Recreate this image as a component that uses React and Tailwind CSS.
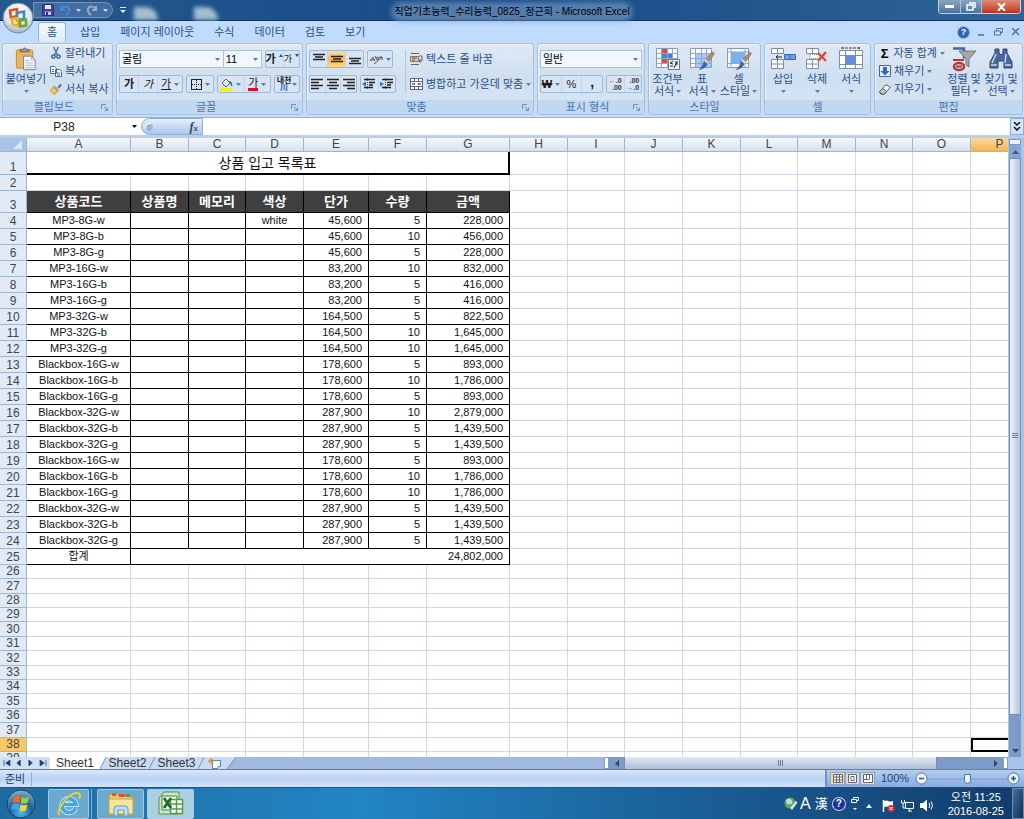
import React from "react";

const KR = "font-['Liberation_Sans','Noto_Sans_CJK_KR',sans-serif]";

/* ---------- data ---------- */
const columns = [
  ["A", 104], ["B", 58], ["C", 57], ["D", 58], ["E", 65], ["F", 58], ["G", 83],
  ["H", 58], ["I", 57], ["J", 58], ["K", 58], ["L", 57], ["M", 58], ["N", 57],
  ["O", 58], ["P", 58],
];
const items = [
  ["MP3-8G-w", "white", "45,600", "5", "228,000"],
  ["MP3-8G-b", "", "45,600", "10", "456,000"],
  ["MP3-8G-g", "", "45,600", "5", "228,000"],
  ["MP3-16G-w", "", "83,200", "10", "832,000"],
  ["MP3-16G-b", "", "83,200", "5", "416,000"],
  ["MP3-16G-g", "", "83,200", "5", "416,000"],
  ["MP3-32G-w", "", "164,500", "5", "822,500"],
  ["MP3-32G-b", "", "164,500", "10", "1,645,000"],
  ["MP3-32G-g", "", "164,500", "10", "1,645,000"],
  ["Blackbox-16G-w", "", "178,600", "5", "893,000"],
  ["Blackbox-16G-b", "", "178,600", "10", "1,786,000"],
  ["Blackbox-16G-g", "", "178,600", "5", "893,000"],
  ["Blackbox-32G-w", "", "287,900", "10", "2,879,000"],
  ["Blackbox-32G-b", "", "287,900", "5", "1,439,500"],
  ["Blackbox-32G-g", "", "287,900", "5", "1,439,500"],
  ["Blackbox-16G-w", "", "178,600", "5", "893,000"],
  ["Blackbox-16G-b", "", "178,600", "10", "1,786,000"],
  ["Blackbox-16G-g", "", "178,600", "10", "1,786,000"],
  ["Blackbox-32G-w", "", "287,900", "5", "1,439,500"],
  ["Blackbox-32G-b", "", "287,900", "5", "1,439,500"],
  ["Blackbox-32G-g", "", "287,900", "5", "1,439,500"],
];
const headings = ["상품코드", "상품명", "메모리", "색상", "단가", "수량", "금액"];

/* ---------- small shared pieces ---------- */
const Caret = ({ className = "text-[#567db1]" }) => (
  <svg width="5" height="3" viewBox="0 0 5 3" className={"shrink-0 " + className} aria-hidden="true">
    <path d="M0 0h5L2.5 3z" fill="currentColor" />
  </svg>
);

const Launcher = () => (
  <button type="button" aria-label="대화 상자 표시" className="text-[#6a8fc0]">
    <svg width="7" height="7" viewBox="0 0 7 7" fill="none" stroke="currentColor">
      <path d="M.5 5V.5H5M3 3l3 3M6.5 3.5v3h-3" />
    </svg>
  </button>
);

const Group = ({ title, launcher, className, children }) => (
  <section className={"flex flex-col overflow-hidden rounded-[3px] border border-[#a3bfe0] bg-linear-to-b from-[#dfe9f5] via-[#cfdff0] to-[#d9e8f8] shadow-[inset_1px_1px_0_#eef5fc] " + className}>
    <div className="flex-1 min-h-0">{children}</div>
    <footer className="flex h-[14px] items-center bg-[#c1d8f0] px-1 text-[11px] leading-none text-[#4a72ae]">
      <span className="flex-1 text-center">{title}</span>
      {launcher && <Launcher />}
    </footer>
  </section>
);

const Box = ({ children, className = "" }) => (
  <div className={"flex h-[18px] items-stretch divide-x divide-[#c3d5ea] rounded-[2px] border border-[#9db9dc] bg-[#d6e4f4] " + className}>{children}</div>
);

const Tool = ({ label, children, active, className = "flex-1" }) => (
  <button type="button" aria-label={label} className={"flex items-center justify-center gap-[3px] text-[11px] leading-none text-[#1c1c1c] " + (active ? "bg-linear-to-b from-[#fde0a0] via-[#fbb64d] to-[#fdda80] " : "") + className}>
    {children}
  </button>
);

const TextTool = ({ icon, label, caret }) => (
  <button type="button" className="flex h-[18px] items-center gap-[3px] whitespace-nowrap text-[11px] leading-none text-[#2c4f87]">
    {icon}
    <span>{label}</span>
    {caret && <Caret />}
  </button>
);

const BigTool = ({ icon, lines, caretBelow, className }) => (
  <button type="button" className={"flex flex-col items-center whitespace-nowrap text-[11px] leading-[12px] text-[#2c4f87] " + className}>
    <span className="mb-px flex h-[26px] items-center">{icon}</span>
    {lines.map((line, i) => (
      <span key={line} className="flex items-center gap-[2px]">
        {line}
        {!caretBelow && i === lines.length - 1 && <Caret />}
      </span>
    ))}
    {caretBelow && <span className="flex h-3 items-center"><Caret /></span>}
  </button>
);

const Lines = ({ d }) => (
  <svg width="12" height="12" viewBox="0 0 12 12" stroke="#222" strokeWidth="1.4" aria-hidden="true"><path d={d} /></svg>
);

/* ---------- icons ---------- */
const Orb = () => (
  <svg width="32" height="32" viewBox="0 0 32 32" aria-hidden="true">
    <defs>
      <radialGradient id="orb" cx=".5" cy=".3" r=".75">
        <stop offset="0" stopColor="#fff" /><stop offset=".6" stopColor="#dfe5ee" /><stop offset="1" stopColor="#93a6c2" />
      </radialGradient>
    </defs>
    <circle cx="16" cy="16" r="15" fill="url(#orb)" stroke="#6d86ab" />
    <g fill="none" strokeWidth="2.600">
      <path d="M8 8.500l7-1.500v7l-6 1.500z" stroke="#e5531a" />
      <path d="M15 11l7-1.500V17l-7 1z" stroke="#3f86cf" />
      <path d="M10 17l6-1v8l-5.500-1.500z" stroke="#f5b21b" />
      <path d="M18 18.500l6-1v6l-6 1z" stroke="#6aa632" />
    </g>
  </svg>
);
const Save = () => (
  <svg width="12" height="12" viewBox="0 0 12 12" aria-hidden="true">
    <path d="M.5.5h10l1 1v10H.5z" fill="#4a3fae" stroke="#2f2a85" />
    <path d="M3 1h6v4H3z" fill="#e9eefb" /><path d="M3 7.500h6V11H3z" fill="#c5cbe6" /><path d="M4 8h2v3H4z" fill="#35308f" />
  </svg>
);
const Undo = ({ className, flip }) => (
  <svg width="12" height="12" viewBox="0 0 12 12" className={className} aria-hidden="true">
    <path d={flip ? "M10 2v4H6M10 5.500C8 2 3 1.500 2 5c-.5 2 1 4.500 3 6" : "M2 2v4h4M2 5.500C4 2 9 1.500 10 5c.5 2-1 4.500-3 6"} fill="none" stroke="currentColor" strokeWidth="2" />
  </svg>
);
const Paste = () => (
  <svg width="22" height="25" viewBox="0 0 22 26" aria-hidden="true">
    <rect x="1" y="3" width="17" height="19" rx="1.500" fill="#edb559" stroke="#c48a35" />
    <path d="M5 5V2.500h2.500Q9.500-.5 11.500 2.500H14V5z" fill="#9a9a9a" stroke="#666" />
    <path d="M8.500 9.500h8l4 4v10h-12z" fill="#fff" stroke="#6c7fa8" />
    <path d="M16.500 9.500v4h4M10.500 14h4M10.500 16.500h8M10.500 19h8M10.500 21.500h8" stroke="#9bacc9" fill="none" />
  </svg>
);
const Cut = () => (
  <svg width="12" height="12" viewBox="0 0 12 12" fill="none" aria-hidden="true">
    <path d="M3.500 0l4 8M8.500 0l-4 8" stroke="#52688f" strokeWidth="1.300" />
    <circle cx="3.500" cy="9.500" r="1.700" stroke="#2b57a8" strokeWidth="1.300" /><circle cx="8.500" cy="9.500" r="1.700" stroke="#2b57a8" strokeWidth="1.300" />
  </svg>
);
const Copy = () => (
  <svg width="12" height="11" viewBox="0 0 12 11" fill="#fff" stroke="#4668a8" aria-hidden="true">
    <path d="M.5.5h4l2 2v5h-6zM5.500 3.500h4l2 2v5h-6z" /><path d="M2 3.500h2M2 5.500h2M7 7h3M7 9h3" />
  </svg>
);
const Painter = () => (
  <svg width="12" height="12" viewBox="0 0 13 12" aria-hidden="true">
    <path d="M8 4l3-4 2 2-3 3.500z" fill="#7b6f9d" /><path d="M5 2l5 4.500-1.500 2L3.500 4z" fill="#a9a9b8" />
    <path d="M3.500 3.500L8.500 8.500l-4 3.500L0 7.500q2-1 3.500-4z" fill="#f1c84e" stroke="#a97c20" strokeWidth=".7" />
  </svg>
);
const Borders = () => (
  <svg width="11" height="11" viewBox="0 0 11 11" fill="none" stroke="#222" aria-hidden="true">
    <rect x=".5" y=".5" width="10" height="10" /><path d="M5.500 1v9M1 5.500h9" strokeDasharray="1 1" />
  </svg>
);
const Bucket = () => (
  <svg width="13" height="13" viewBox="0 0 13 13" aria-hidden="true">
    <path d="M2 5l4-4 4 4-4 4z" fill="#e5edf8" stroke="#44608f" /><path d="M9 4q3 0 2.500 4" stroke="#2f62b5" strokeWidth="1.500" fill="none" />
    <path d="M0 10h12v3H0z" fill="#f6ee0f" />
  </svg>
);
const Orient = () => (
  <svg width="14" height="12" viewBox="0 0 14 12" fill="none" stroke="#555" aria-hidden="true">
    <path d="M1 8l3-4 2 4M2 7h3M6 3l2 4 2-1-1-2-2 1M5 11l8-7M10 4h3v3" />
  </svg>
);
const Indent = ({ flip }) => (
  <svg width="14" height="12" viewBox="0 0 14 12" aria-hidden="true">
    <path d="M2 1.500h11M7 4.500h6M7 7h4M2 9.500h9" stroke="#222" fill="none" strokeWidth="1.400" />
    <path d="M5.500 0v12" stroke="#555" strokeDasharray="1 1" />
    <path d={flip ? "M0 3.500L4 6 0 8.500z" : "M4 3.500L0 6l4 2.500z"} fill="#2f6fce" />
  </svg>
);
const Wrap = () => (
  <svg width="13" height="12" viewBox="0 0 13 12" fill="none" aria-hidden="true">
    <path d="M1 .5h8M1 11.500h8" stroke="#666" /><path d="M.5 3.500h8v5h-8z" fill="#f7c48b" stroke="#9a7650" />
    <path d="M9 3h3v5H9M10.500 6L9 8l1.500 2" stroke="#44608f" /><path d="M2 5h5M2 7h3" stroke="#555" />
  </svg>
);
const Merge = () => (
  <svg width="13" height="12" viewBox="0 0 13 12" fill="#fff" stroke="#57688a" aria-hidden="true">
    <path d="M.5.5h12v11H.5zM.5 3.500h12M.5 8.500h12M4.500.5v3M8.500.5v3M4.500 8.500v3M8.500 8.500v3" />
    <path d="M2 6h3L4 5M11 6H8l1-1" stroke="#222" fill="none" />
  </svg>
);
const Decimal = ({ top, bottom, flip }) => (
  <span className="flex flex-col items-end text-[7px] leading-[7px] font-bold text-[#333]">
    <span>{!flip && <b className="text-[#2f6fce]">←</b>}{top}</span><span>{flip && <b className="text-[#2f6fce]">→</b>}{bottom}</span>
  </span>
);
const Grid = ({ children }) => (
  <svg width="26" height="24" viewBox="0 0 26 24" aria-hidden="true">
    <path d="M1.500 1.500h21v19h-21z" fill="#fff" stroke="#7d9ac5" />
    {children}
  </svg>
);
const lattice = <path d="M6.500 1.500v19M12.500 1.500v19M17.500 1.500v19M1.500 6.500h21M1.500 11.500h21M1.500 16.500h21" stroke="#8ea7cf" fill="none" />;
const brush = (
  <g><path d="M23.500 5l2 1.500-7 10-3-2.500z" fill="#b98d5c" stroke="#6f6f78" strokeWidth=".7" /><path d="M16.500 12l3.500 3-1.500 2-3.500-3z" fill="#d5d5da" /><path d="M15 14l3.500 3q-2 5-9 6 4-3 5.500-9z" fill="#3b64ae" /></g>
);
const CondFormat = () => (
  <Grid>
    <path d="M7 2h6v5H7zM7 12h6v4H7z" fill="#de4f3c" /><path d="M7 7h10v4H7z" fill="#4b7ed4" />{lattice}
    <path d="M13.500 12.500h11v10h-11z" fill="#eef2f8" stroke="#777" /><path d="M18 14l-3 2 3 1M15 19h3M20 15h3M20 17h3M19 21l3-6" stroke="#222" fill="none" />
  </Grid>
);
const TableFormat = () => <Grid><path d="M7 7h15v13H7z" fill="#a9c8f5" />{lattice}{brush}</Grid>;
const CellStyle = () => <Grid><path d="M5 5h14v11H5z" fill="#7eaef2" /><path d="M1.500 5h21M1.500 16.500h21M5 1.500v19M19 1.500v19" stroke="#8ea7cf" />{brush}</Grid>;
const InsertCell = () => (
  <svg width="26" height="24" viewBox="0 0 26 24" fill="#fff" stroke="#7f8ea8" aria-hidden="true">
    <path d="M1.500 1.500h12v5h-12zM7.500 1.500v5M1.500 12.500h12v9h-12zM7.500 12.500v9M1.500 17h12" />
    <path d="M14.500 7.500h11v5h-11zM20 7.500v5" fill="#6f9de6" stroke="#3c68b3" /><path d="M12 10H6l2-2M6 10l2 2" stroke="#222" fill="none" />
  </svg>
);
const DeleteCell = () => (
  <svg width="24" height="24" viewBox="0 0 24 24" fill="#fff" stroke="#7f8ea8" aria-hidden="true">
    <path d="M1.500 1.500h12v5h-12zM7.500 1.500v5M1.500 12.500h12v9h-12zM7.500 12.500v9M1.500 17h12" />
    <path d="M5 7.500h9v4H5z" strokeDasharray="1 1" /><path d="M13 6l8 8M21 5l-8 9" stroke="#e2452c" strokeWidth="2.200" />
  </svg>
);
const CellFormat = () => (
  <svg width="26" height="24" viewBox="0 0 26 24" fill="#fff" stroke="#7f8ea8" aria-hidden="true">
    <path d="M1.500 3.500h23v18h-23z" /><path d="M8 9h9v8H8z" fill="#5c8fe6" stroke="none" /><path d="M7.500 3.500v18M17.500 3.500v18M1.500 8.500h23M1.500 17.500h23" fill="none" />
    <path d="M3 1h20M5 0v2M21 0v2" stroke="#444" strokeDasharray="3 1" />
  </svg>
);
const SortFilter = () => (
  <svg width="26" height="25" viewBox="0 0 26 25" fill="none" aria-hidden="true">
    <path d="M2 1.500h11v10" stroke="#3968b4" strokeWidth="2.500" />
    <path d="M8 4h17l-7 8v8l-3-2v-6z" fill="#a8a8a8" stroke="#666" strokeWidth=".8" />
    <ellipse cx="8" cy="19.500" rx="5" ry="3.500" stroke="#a93c3c" strokeWidth="2.500" /><path d="M2 13h11M5 19.500h6" stroke="#a93c3c" strokeWidth="2" />
  </svg>
);
const Binoculars = () => (
  <svg width="24" height="22" viewBox="0 0 24 22" fill="#4a69a0" stroke="#2b4270" aria-hidden="true">
    <path d="M6 1h4v4l2 2 2-2V1h4v4l5 9v6h-8v-7h-6v7H1v-6l5-9z" />
    <path d="M3 15l4-9M16 15l1-9M2 17h6M16 17h6" stroke="#c7d8f3" strokeWidth="1.500" />
  </svg>
);
const Fill = () => (
  <svg width="12" height="12" viewBox="0 0 12 12" aria-hidden="true"><path d="M.5.5h11v11H.5z" fill="#e8f0fb" stroke="#4668a8" /><path d="M4 2h4v4h2.500L6 10.500 1.500 6H4z" fill="#2c69d2" /></svg>
);
const Eraser = () => (
  <svg width="12" height="11" viewBox="0 0 12 11" aria-hidden="true"><path d="M7 .7l4.300 2.600L5.500 10H2L.7 7.500z" fill="#fff" stroke="#555" /><path d="M3.500 4.500l4 3L5.500 10H2L.7 7.500z" fill="#c6cad5" stroke="#555" /></svg>
);
const SizeMark = ({ d }) => (
  <svg width="4" height="10" viewBox="0 0 4 10" aria-hidden="true"><path d={d} fill="#2c4f87" /></svg>
);

/* ---------- window chrome ---------- */
function TitleBar() {
  return (
    <div className="grid h-[21px] grid-cols-[1fr_auto_1fr] border-b border-[#0d2f5c] bg-linear-to-r from-[#26588d] via-[#174b86] to-[#2f6597]">
      <div className="flex items-center pl-[33px]">
        <div className="flex h-4 w-[80px] items-center gap-[5px] rounded-r-full border border-[#7592b8] bg-[#5078a8]/70 pl-2">
          <button type="button" aria-label="저장"><Save /></button>
          <button type="button" aria-label="실행 취소" className="flex items-center gap-[5px]"><Undo className="text-[#4f83d8]" /><Caret className="text-[#c7d8ee]" /></button>
          <button type="button" aria-label="다시 실행" className="flex items-center gap-[5px]"><Undo flip className="text-[#93abc9]" /><Caret className="text-[#c7d8ee]" /></button>
        </div>
        <button type="button" aria-label="빠른 실행 도구 모음 사용자 지정" className="ml-[7px] text-[#dce8f6]">
          <svg width="6" height="6" viewBox="0 0 6 6"><path d="M0 0h6v1H0zM0 3h6L3 6z" fill="currentColor" /></svg>
        </button>
        <span className="ml-2 h-[13px] w-6 self-end rounded-tr-full bg-[#c3dbe4]/80 blur-[2px]" />
        <span className="ml-9 h-[13px] w-6 self-end rounded-tr-full bg-[#c3dbe4]/80 blur-[2px]" />
      </div>
      <h1 className="mt-1 h-[14px] self-center rounded-full bg-[#7d9fc4]/60 text-[10px] leading-[14px] whitespace-nowrap text-black shadow-[0_0_5px_3px_rgba(125,159,196,0.6)]">
        직업기초능력_수리능력_0825_정근희 - Microsoft Excel
      </h1>
      <div className="flex h-[14px] justify-end pr-[3px]">
        <div className="flex overflow-hidden rounded-b-[4px] border border-t-0 border-[#c2d2e4] text-white">
          <button type="button" aria-label="최소화" className="flex w-[22px] items-center justify-center border-r border-[#a8bdd6] bg-linear-to-b from-[#8ba6c4] to-[#4d7199]"><svg width="9" height="3"><path d="M0 0h9v3H0z" fill="#fff" /></svg></button>
          <button type="button" aria-label="이전 크기로 복원" className="flex w-[21px] items-center justify-center border-r border-[#a8bdd6] bg-linear-to-b from-[#8ba6c4] to-[#4d7199]"><svg width="10" height="9" fill="none" stroke="#fff" strokeWidth="1.500"><path d="M3 1h6v5M1 3h6v5H1z" /></svg></button>
          <button type="button" aria-label="닫기" className="flex w-[38px] items-center justify-center bg-linear-to-b from-[#d98a78] to-[#c0301a]"><svg width="9" height="8" stroke="#fff" strokeWidth="2"><path d="M1 0l7 8M8 0L1 8" /></svg></button>
        </div>
      </div>
    </div>
  );
}

function Tabs() {
  return (
    <nav className="flex h-[21px] items-end bg-[#bfdbff] pl-[38px] text-[11px] leading-none text-[#2c4f87]">
      <button type="button" className="mr-1 h-5 w-7 rounded-t-[3px] border border-b-0 border-[#93b3e0] bg-linear-to-b from-[#f6faff] to-[#dfebf8]">홈</button>
      {["삽입", "페이지 레이아웃", "수식", "데이터", "검토", "보기"].map((t) => (
        <button key={t} type="button" className="h-5 px-[10px] whitespace-nowrap">{t}</button>
      ))}
      <div className="ml-auto flex h-5 items-center gap-[9px] pr-1 text-[#55719b]">
        <button type="button" aria-label="도움말" className="h-[11px] w-[11px] rounded-full bg-[#2d62b8] text-[9px] leading-[11px] font-bold text-white ring-1 ring-[#8aaee4]">?</button>
        <button type="button" aria-label="창 최소화"><svg width="7" height="8" stroke="currentColor" strokeWidth="1.500"><path d="M0 7h6" /></svg></button>
        <button type="button" aria-label="창 복원"><svg width="9" height="8" fill="none" stroke="currentColor"><path d="M2.500 3V.5h6v4H7M.5 3h6v4h-6z" /></svg></button>
        <button type="button" aria-label="창 닫기"><svg width="8" height="8" stroke="currentColor" strokeWidth="1.500"><path d="M0 0l7 7M7 0L0 7" /></svg></button>
      </div>
    </nav>
  );
}

const FieldSelect = ({ label, value, className }) => (
  <label className={"flex h-[18px] items-center border border-[#abc1de] bg-[#f2f7fd] pr-[3px] " + className}>
    <select aria-label={label} defaultValue={value} className="min-w-0 flex-1 appearance-none bg-transparent pl-[2px] text-[11px] leading-4 text-black outline-none"><option>{value}</option></select>
    <Caret />
  </label>
);

function Ribbon() {
  return (
    <div className="flex h-[76px] gap-[3px] border-b border-[#8db2dd] bg-[#c9def6] px-[2px] pt-px pb-[2px]">
      <Group title="클립보드" launcher className="w-[111px] shrink-0">
        <div className="flex">
          <BigTool className="w-[46px] pt-[2px]" icon={<Paste />} lines={["붙여넣기"]} caretBelow />
          <div className="flex flex-col pl-px">
            <TextTool icon={<Cut />} label="잘라내기" />
            <TextTool icon={<Copy />} label="복사" />
            <TextTool icon={<Painter />} label="서식 복사" />
          </div>
        </div>
      </Group>

      <Group title="글꼴" launcher className="w-[187px] shrink-0">
        <div className="flex flex-col gap-[7px] px-[2px] pt-[6px]">
          <div className="flex">
            <FieldSelect label="글꼴" value="굴림" className="w-[105px]" />
            <FieldSelect label="글꼴 크기" value="11" className="mr-[3px] w-[38px] border-l-0" />
            <Box className="flex-1">
              <Tool label="글꼴 크기 크게" className="flex-1 gap-0"><span className="font-bold">가</span><SizeMark d="M0 3h4L2 0z" /></Tool>
              <Tool label="글꼴 크기 작게" className="flex-1 gap-0"><span className="text-[9px]">가</span><SizeMark d="M0 0h4L2 3z" /></Tool>
            </Box>
          </div>
          <div className="flex gap-[3px]">
            <Box className="w-[64px]">
              <Tool label="굵게"><b>가</b></Tool>
              <Tool label="기울임꼴"><i>가</i></Tool>
              <Tool label="밑줄" className="w-[24px]"><u>가</u><Caret /></Tool>
            </Box>
            <Box className="w-[28px]"><Tool label="테두리"><Borders /><Caret /></Tool></Box>
            <Box className="w-[54px]">
              <Tool label="채우기 색"><Bucket /><Caret /></Tool>
              <Tool label="글꼴 색"><span className="border-b-[3px] border-[#e00b1c] leading-[10px]">가</span><Caret /></Tool>
            </Box>
            <Box className="flex-1"><Tool label="윗주 필드" className="flex-1 gap-px"><span className="flex flex-col items-center text-[8px] leading-[7px] font-bold"><span>내천</span><span className="text-[#2f58a8]">川</span></span><Caret /></Tool></Box>
          </div>
        </div>
      </Group>

      <Group title="맞춤" launcher className="w-[228px] shrink-0">
        <div className="flex pt-[6px] pl-[2px]">
          <div className="flex w-[97px] flex-col gap-[7px] border-r border-[#adc5e2] pr-[9px]">
            <div className="flex gap-[3px]">
              <Box className="w-[55px]">
                <Tool label="위쪽 맞춤"><Lines d="M0 1.500h12M2 4h8M0 6.500h12" /></Tool>
                <Tool label="가운데 맞춤" active><Lines d="M0 3.500h12M2 6h8M0 8.500h12" /></Tool>
                <Tool label="아래쪽 맞춤"><Lines d="M0 5.500h12M2 8h8M0 10.500h12" /></Tool>
              </Box>
              <Box className="w-[26px]"><Tool label="방향"><Orient /><Caret /></Tool></Box>
            </div>
            <div className="flex gap-[3px]">
              <Box className="w-[55px]">
                <Tool label="왼쪽 맞춤"><Lines d="M0 1.500h12M0 4.500h8M0 7.500h12M0 10.500h8" /></Tool>
                <Tool label="가로 가운데 맞춤"><Lines d="M0 1.500h12M2 4.500h8M0 7.500h12M2 10.500h8" /></Tool>
                <Tool label="오른쪽 맞춤"><Lines d="M0 1.500h12M4 4.500h8M0 7.500h12M4 10.500h8" /></Tool>
              </Box>
              <Box className="w-[36px] shrink-0"><Tool label="내어쓰기"><Indent /></Tool><Tool label="들여쓰기"><Indent flip /></Tool></Box>
            </div>
          </div>
          <div className="flex flex-col gap-[7px] pl-1">
            <TextTool icon={<Wrap />} label="텍스트 줄 바꿈" />
            <TextTool icon={<Merge />} label="병합하고 가운데 맞춤" caret />
          </div>
        </div>
      </Group>

      <Group title="표시 형식" launcher className="w-[108px] shrink-0">
        <div className="flex flex-col gap-[7px] px-[2px] pt-[6px]">
          <FieldSelect label="표시 형식" value="일반" className="w-full" />
          <div className="flex gap-[3px]">
            <Box className="w-[63px]">
              <Tool label="통화 스타일"><b>₩</b><Caret /></Tool>
              <Tool label="백분율 스타일">%</Tool>
              <Tool label="쉼표 스타일"><b className="pb-1 text-[14px]">,</b></Tool>
            </Box>
            <Box className="flex-1"><Tool label="자릿수 늘림"><Decimal top=".0" bottom=".00" /></Tool><Tool label="자릿수 줄임"><Decimal flip top=".00" bottom=".0" /></Tool></Box>
          </div>
        </div>
      </Group>

      <Group title="스타일" className="w-[113px] shrink-0">
        <div className="flex pt-[2px] pl-[1px]">
          <BigTool className="w-[35px]" icon={<CondFormat />} lines={["조건부", "서식"]} />
          <BigTool className="w-[34px]" icon={<TableFormat />} lines={["표", "서식"]} />
          <BigTool className="w-[39px]" icon={<CellStyle />} lines={["셀", "스타일"]} />
        </div>
      </Group>

      <Group title="셀" className="w-[107px] shrink-0">
        <div className="flex pt-[2px] pl-px">
          <BigTool className="w-[34px]" icon={<InsertCell />} lines={["삽입"]} caretBelow />
          <BigTool className="w-[34px]" icon={<DeleteCell />} lines={["삭제"]} caretBelow />
          <BigTool className="w-[34px]" icon={<CellFormat />} lines={["서식"]} caretBelow />
        </div>
      </Group>

      <Group title="편집" className="min-w-[149px] flex-1">
        <div className="flex pl-1">
          <div className="flex w-[66px] flex-col">
            <TextTool icon={<b className="w-3 text-center text-[13px] text-black">Σ</b>} label="자동 합계" caret />
            <TextTool icon={<Fill />} label="채우기" caret />
            <TextTool icon={<Eraser />} label="지우기" caret />
          </div>
          <BigTool className="w-[38px] pt-[2px]" icon={<SortFilter />} lines={["정렬 및", "필터"]} />
          <BigTool className="w-[36px] pt-[2px]" icon={<Binoculars />} lines={["찾기 및", "선택"]} />
        </div>
      </Group>
    </div>
  );
}

function FormulaBar() {
  return (
    <div className="flex h-5 shrink-0 items-stretch border-b-[3px] border-[#b7cfe9] bg-white text-[12px]">
      <input aria-label="이름 상자" defaultValue="P38" className="w-[128px] min-w-0 bg-white text-center text-[12px] text-[#222] outline-none" />
      <button type="button" aria-label="이름 목록" className="flex w-[13px] items-center justify-center"><Caret className="text-black" /></button>
      <div className="flex w-[62px] items-center justify-between rounded-l-full border border-[#8eaedb] bg-linear-to-b from-[#e6f0fc] to-[#a9c6ef] pr-1 pl-[3px]">
        <span className="h-[8px] w-[8px] rounded-full bg-[#9cb6dc] shadow-[inset_1px_1px_0_white]" />
        <button type="button" aria-label="함수 삽입" className="font-['Liberation_Serif',serif] text-[12px] leading-none font-bold text-[#444] italic">f<span className="text-[9px]">x</span></button>
      </div>
      <input aria-label="수식 입력줄" className="min-w-0 flex-1 bg-white px-1 outline-none" />
      <button type="button" aria-label="수식 입력줄 확장" className="flex w-[14px] items-center justify-center border border-[#8eaedb] bg-[#d5e4f7]">
        <svg width="8" height="9" fill="none" stroke="#111" strokeWidth="1.500"><path d="M1 0l3 3 3-3M1 5l3 3 3-3" /></svg>
      </button>
    </div>
  );
}

/* ---------- worksheet ---------- */
const gridCell = "border-r border-b border-[#d3d9e2]";
const dataCell = "h-4 border-r border-b border-black";
const Blank = ({ count }) => Array.from({ length: count }, (_, i) => <td key={i} className={gridCell} />);
const RowHead = ({ n, className = "h-4", active }) => (
  <th scope="row" className={"border-r border-b border-[#9eb6ce] p-0 text-center align-bottom text-[12px] leading-[13px] font-normal text-[#444] " + (active ? "bg-[#f8c66b] " : "bg-[#e1ebf7] ") + className}>{n}</th>
);

function Sheet() {
  return (
    <table className="w-[1029px] table-fixed border-separate border-spacing-0 bg-white text-[11px] leading-[13px] text-[#111] [&_td]:p-0">
      <colgroup>
        <col className="w-[27px]" />
        {columns.map(([c, w]) => <col key={c} style={{ width: w }} />)}
      </colgroup>
      <thead>
        <tr>
          <th className="h-[14px] border-r border-b border-[#9eb6ce] bg-[#a9c4e9] p-0 align-bottom">
            <svg width="9" height="9" viewBox="0 0 9 9" className="mr-1 mb-[2px] ml-auto" aria-hidden="true"><path d="M9 0v9H0z" fill="#dce8f8" /></svg>
          </th>
          {columns.map(([c]) => (
            <th key={c} scope="col" className={"h-[14px] border-r border-b border-[#9eb6ce] p-0 text-[12px] leading-[13px] font-normal text-[#444] " + (c === "P" ? "bg-linear-to-b from-[#f9d99f] to-[#f1b653]" : "bg-linear-to-b from-[#f4f8fd] to-[#d5e1f0]")}>{c}</th>
          ))}
        </tr>
      </thead>
      <tbody>
        <tr>
          <RowHead n={1} className="h-[23px]" />
          <td colSpan={7} className="h-[23px] border-r-2 border-b-2 border-black text-center text-[14px] leading-[18px]">상품 입고 목록표</td>
          <Blank count={9} />
        </tr>
        <tr><RowHead n={2} /><Blank count={16} /></tr>
        <tr>
          <RowHead n={3} className="h-[22px]" />
          {headings.map((h) => <td key={h} className="border-r border-b border-black bg-[#3f3f3f] text-center text-[13px] leading-4 font-bold text-white">{h}</td>)}
          <Blank count={9} />
        </tr>
        {items.map(([code, color, price, qty, total], i) => (
          <tr key={i}>
            <RowHead n={i + 4} />
            <td className={dataCell + " text-center"}>{code}</td>
            <td className={dataCell} />
            <td className={dataCell} />
            <td className={dataCell + " text-center"}>{color}</td>
            <td className={dataCell + " text-right"}><span className="mr-[6px]">{price}</span></td>
            <td className={dataCell + " text-right"}><span className="mr-[6px]">{qty}</span></td>
            <td className={dataCell + " text-right"}><span className="mr-[6px]">{total}</span></td>
            <Blank count={9} />
          </tr>
        ))}
        <tr>
          <RowHead n={25} />
          <td className={dataCell + " text-center"}>합계</td>
          <td colSpan={6} className={dataCell + " text-right"}><span className="mr-[6px]">24,802,000</span></td>
          <Blank count={9} />
        </tr>
        {Array.from({ length: 14 }, (_, i) => i + 26).map((n) => (
          <tr key={n}>
            <RowHead n={n} active={n === 38} className={n % 5 === 2 || n % 5 === 0 ? "h-[15px]" : "h-[14px]"} />
            {n === 38 ? <><Blank count={15} /><td className="border-2 border-black" /></> : <Blank count={16} />}
          </tr>
        ))}
      </tbody>
    </table>
  );
}

function VScroll() {
  return (
    <div className="flex w-4 shrink-0 flex-col items-center bg-[#a9c4e9] pr-[3px] pl-px">
      <span className="mt-px h-[6px] w-full border border-[#7d9cc7] bg-[#eef4fc]" />
      <button type="button" aria-label="위로" className="flex h-[13px] w-full items-center justify-center bg-[#87a7d5]"><svg width="7" height="4"><path d="M0 4h7L3.500 0z" fill="#44597f" /></svg></button>
      <div className="flex w-full flex-1 flex-col bg-[#7d9bc9]">
        <div className="flex h-[95%] items-center justify-center border border-[#6f8ebb] bg-linear-to-r from-[#eef3fa] to-[#b6c5dc]"><svg width="6" height="6" stroke="#6a7e9f"><path d="M0 .5h6M0 2.500h6M0 4.500h6" /></svg></div>
      </div>
      <button type="button" aria-label="아래로" className="flex h-[13px] w-full items-center justify-center bg-[#7d9bc9]"><svg width="7" height="4"><path d="M0 0h7L3.500 4z" fill="#34496f" /></svg></button>
    </div>
  );
}

const navIcons = [["첫 시트", "M1 0v7M8 0L3 3.500 8 7z"], ["이전 시트", "M6 0L2 3.500 6 7z"], ["다음 시트", "M2 0l4 3.500L2 7z"], ["마지막 시트", "M8 0v7M1 0l5 3.500L1 7z"]];

function SheetTabs() {
  return (
    <div className="flex h-[13px] shrink-0 items-stretch border-b border-[#5f7fae] bg-[#9fb9e0] text-[12px] leading-[12px] text-[#333]">
      <div className="flex w-[50px] items-center justify-around bg-[#cfdff4] px-px">
        {navIcons.map(([label, d]) => <button key={label} type="button" aria-label={label}><svg width="8" height="6" viewBox="0 0 9 7" fill="#1d3f7f" stroke="#1d3f7f" strokeWidth=".8"><path d={d} /></svg></button>)}
      </div>
      <button type="button" className="w-[50px] bg-white">Sheet1</button>
      {["Sheet2", "Sheet3"].map((s, i) => (
        <React.Fragment key={s}>
          <svg width="6" height="12" viewBox="0 0 6 12" className="bg-[#c9dbf4]" aria-hidden="true">{i === 0 && <path d="M0 0h6L0 12z" fill="#fff" />}<path d="M6 0L0 12" stroke="#7690b8" /></svg>
          <button type="button" className="w-[43px] bg-[#c9dbf4]">{s}</button>
        </React.Fragment>
      ))}
      <button type="button" aria-label="워크시트 삽입" className="flex items-center gap-1 bg-[#c9dbf4]">
        <svg width="6" height="12" viewBox="0 0 6 12"><path d="M6 0L0 12" stroke="#7690b8" fill="none" /></svg>
        <svg width="14" height="11" viewBox="0 0 14 11"><path d="M4.500 2.500h8v6h-2l-1 2h-5z" fill="#fff" stroke="#6481ac" /><path d="M3 0v6M0 3h6M1 1l4 4M5 1L1 5" stroke="#e88c1f" /></svg>
      </button>
      <svg width="14" height="12" viewBox="0 0 14 12" aria-hidden="true"><path d="M0 0h14L5 12H0z" fill="#c9dbf4" /><path d="M14 0L5 12" stroke="#7690b8" /></svg>
      <div className="ml-auto flex w-[41%] items-stretch bg-[#7d9bc9]">
        <span className="w-[5px] border border-[#7d9cc7] bg-white" />
        <button type="button" aria-label="왼쪽으로" className="flex w-[15px] items-center justify-center"><svg width="4" height="7"><path d="M4 0v7L0 3.500z" fill="#34496f" /></svg></button>
        <div className="flex flex-1">
          <div className="flex w-[86%] items-center justify-center border-x border-[#6f8ebb] bg-linear-to-b from-[#e3e9f2] to-[#aebdd5]"><svg width="6" height="6" stroke="#6a7e9f"><path d="M.5 0v6M2.500 0v6M4.500 0v6" /></svg></div>
        </div>
        <button type="button" aria-label="오른쪽으로" className="flex w-[15px] items-center justify-center"><svg width="4" height="7"><path d="M0 0v7l4-3.500z" fill="#34496f" /></svg></button>
        <span className="w-[5px] border border-[#7d9cc7] bg-white" />
        <span className="w-4 bg-[#a9c4e9]" />
      </div>
    </div>
  );
}

function StatusBar() {
  const view = "flex w-[15px] items-center justify-center border border-[#8fa6c8]";
  return (
    <div className="flex h-[18px] shrink-0 items-center border-b border-[#1d4f8d] bg-linear-to-b from-[#dbe8fa] via-[#b9d1f3] to-[#d3e3fa] text-[11px] leading-none text-[#1f3f73]">
      <span className="w-8 border-r border-[#8fb0df] pl-[5px] leading-[14px]">준비</span>
      <div className="ml-auto flex h-full w-[199px] items-center border-l-2 border-[#6f93c8] bg-linear-to-b from-[#b4cdf0] to-[#86abdf] pr-1 pl-[3px]">
        <div className="flex h-[13px]">
          <button type="button" aria-label="기본 보기" className={view + " bg-[#fbd890]"}><svg width="10" height="9" fill="#fff" stroke="#666"><path d="M.5.5h9v8h-9zM3.500.5v8M6.500.5v8M.5 3h9M.5 6h9" /></svg></button>
          <button type="button" aria-label="페이지 레이아웃 보기" className={view + " bg-[#d5dbe6]"}><svg width="9" height="9" fill="#fff" stroke="#666"><path d="M.5.5h8v8h-8zM3 2.500h3v4H3z" /></svg></button>
          <button type="button" aria-label="페이지 나누기 미리 보기" className={view + " bg-[#d5dbe6]"}><svg width="10" height="9" fill="#fff" stroke="#666"><path d="M.5.5h9v8h-9zM3.500.5v5M6.500.5v5h-6" /></svg></button>
        </div>
        <button type="button" className="mx-[6px] text-[11px]">100%</button>
        <button type="button" aria-label="축소" className="shrink-0"><svg width="13" height="13"><circle cx="6.500" cy="6.500" r="5.500" fill="#e9f1fc" stroke="#55749f" /><path d="M4 6.500h5" stroke="#33517e" strokeWidth="1.500" /></svg></button>
        <input type="range" aria-label="확대/축소" defaultValue="50" className="h-3 min-w-0 flex-1 appearance-none bg-linear-to-b from-transparent from-45% via-[#3f5f92] via-50% to-transparent to-55% [&::-webkit-slider-thumb]:h-[10px] [&::-webkit-slider-thumb]:w-[7px] [&::-webkit-slider-thumb]:appearance-none [&::-webkit-slider-thumb]:rounded-b-full [&::-webkit-slider-thumb]:border [&::-webkit-slider-thumb]:border-[#55749f] [&::-webkit-slider-thumb]:bg-[#e9f1fc]" />
        <button type="button" aria-label="확대" className="shrink-0"><svg width="13" height="13"><circle cx="6.500" cy="6.500" r="5.500" fill="#e9f1fc" stroke="#55749f" /><path d="M4 6.500h5M6.500 4v5" stroke="#33517e" strokeWidth="1.500" /></svg></button>
      </div>
    </div>
  );
}

/* ---------- taskbar ---------- */
function Taskbar() {
  const app = "flex h-[30px] items-center justify-center rounded-[2px] border border-[#a9cfe6]/80 ";
  return (
    <footer className="flex h-[31px] shrink-0 items-center bg-linear-to-r from-[#1f6a9e] via-[#2285c4] via-35% to-[#123c6c] text-white">
      <button type="button" aria-label="시작" className="ml-[6px]">
        <svg width="30" height="30" viewBox="0 0 30 30">
          <defs><radialGradient id="start" cx=".5" cy=".8" r=".8"><stop offset="0" stopColor="#49c4ee" /><stop offset=".5" stopColor="#1c5f9b" /><stop offset="1" stopColor="#8cb4d2" /></radialGradient></defs>
          <circle cx="15" cy="15" r="14" fill="url(#start)" stroke="#173f66" />
          <path d="M8 8q3-2 6.500-.5L13.500 14Q10 12.500 6.500 14z" fill="#ee6a2c" /><path d="M15.500 8q3.500 1.500 7.500 0l-1.500 6q-3.500 1.500-7 0z" fill="#9ccb3b" />
          <path d="M6.500 15q3.500-1.500 7 0l-1 6Q9 19.500 5 21z" fill="#4aa3e8" /><path d="M14.500 15.500q3.500 1.500 7 0l-1.500 6q-3.500 1.500-6.500 0z" fill="#fbd03b" />
        </svg>
      </button>
      <div className="ml-3 flex gap-[3px]">
        <div className="flex">
          <button type="button" aria-label="Internet Explorer" className={app + "w-[41px] bg-[#7fb8da]/80"}>
            <svg width="26" height="26" viewBox="0 0 26 26" fill="none">
              <path d="M19.500 17.500A7 7 0 1 1 20 13.500H8" stroke="#e6f6ff" strokeWidth="5" /><path d="M19.500 17.500A7 7 0 1 1 20 13.500H8" stroke="#3fa9e4" strokeWidth="3.600" />
              <path d="M3.500 24C-1 20 14-1 23 2.500c2 1 1 4 0 5.500" stroke="#f4c534" strokeWidth="2" />
            </svg>
          </button>
          <span className="w-[3px] border-r border-[#a9cfe6]/70" />
        </div>
        <button type="button" aria-label="Windows 탐색기" className={app + "ml-[2px] w-[47px] bg-[#7fb8da]/80"}>
          <svg width="28" height="26" viewBox="0 0 28 26">
            <path d="M2 3h9l1 2h13v18H2z" fill="#e9c765" stroke="#b5903a" /><path d="M5 2h4v3H5zM12 3h6v3h-6z" fill="#d8543a" /><path d="M19 3h4v3h-4z" fill="#4b9c48" />
            <path d="M2 8h24v15H2z" fill="#f8e39a" stroke="#c9a548" /><path d="M7 25v-7q0-3 3-3h8q3 0 3 3v7h-4v-6h-6v6z" fill="#b9def5" stroke="#5b9fcc" />
          </svg>
        </button>
        <button type="button" aria-label="Microsoft Excel" className={app + "w-[47px] bg-[#b9d9e6]/90"}>
          <svg width="26" height="26" viewBox="0 0 26 26">
            <path d="M6 1h15v22H1V7z" fill="#cfe6c4" stroke="#4f9150" /><path d="M4 5h15v14H4z" fill="#f4faf0" stroke="#3c7f3d" />
            <path d="M12.500 8.500h12v14h-12zM18.500 8.500v14M12.500 13h12M12.500 18h12" fill="#fff" stroke="#4f9d4a" strokeWidth="1.500" />
            <path d="M6 7l7 10M13 7L6 17" stroke="#1f6b2a" strokeWidth="2.800" />
          </svg>
        </button>
      </div>
      <div className="ml-auto flex h-full items-center">
        <svg width="14" height="14" viewBox="0 0 14 14" className="mr-[2px]" aria-hidden="true"><circle cx="6" cy="6" r="5.500" fill="#5fa85a" /><path d="M2 3q4-3 6 1t-5 3z" fill="#b7dcf0" /><path d="M6 11l6-7 1.500 1.500L8 13z" fill="#eee" stroke="#888" strokeWidth=".5" /></svg>
        <span className="mr-1 text-[16px] leading-none">A</span>
        <span className="mr-[5px] text-[13px] leading-none">漢</span>
        <span className="mr-[6px] h-3 w-3 rounded-full bg-[#1c2f9c] text-center text-[10px] leading-3 font-bold ring-1 ring-[#c9d3f5]">?</span>
        <svg width="8" height="14" viewBox="0 0 8 14" className="mr-[7px]" fill="none" stroke="#fff" aria-hidden="true"><path d="M2.500 2V.5h5v3H6M.5 2.500h5v3h-5z" /><path d="M2 11h4l-2 2z" fill="#fff" stroke="none" /></svg>
        <svg width="6" height="4" className="mt-1 mr-[10px]" aria-hidden="true"><path d="M0 4h6L3 0z" fill="#fff" /></svg>
        <svg width="13" height="14" viewBox="0 0 13 14" className="mt-1 mr-[6px]" aria-hidden="true"><path d="M1.500 1v12" stroke="#fff" strokeWidth="1.500" /><path d="M2 2q3-1 4 0t5 0v6q-3 1-4 0T2 8z" fill="#fff" /><circle cx="9" cy="9.500" r="3.500" fill="#d5302a" /><path d="M7.500 8l3 3M10.500 8l-3 3" stroke="#fff" /></svg>
        <svg width="13" height="13" viewBox="0 0 13 13" className="mt-1 mr-[6px]" fill="none" stroke="#fff" aria-hidden="true"><path d="M4.500 3.500h8v6h-8zM7 12h4M8.500 10v2M.5 1v3h3V1M2 4v5h2" /></svg>
        <svg width="14" height="13" viewBox="0 0 14 13" className="mt-1 mr-[14px]" aria-hidden="true"><path d="M0 4h3l4-3.500v12L3 9H0z" fill="#fff" /><path d="M9 4q1.500 2.500 0 5M11 2.500q3 4 0 8" stroke="#fff" fill="none" /></svg>
        <time dateTime="2016-08-25T11:25" className="mr-[8px] flex flex-col items-center text-[11px] leading-[14px] whitespace-nowrap">
          <span>오전 11:25</span><span>2016-08-25</span>
        </time>
        <button type="button" aria-label="바탕 화면 보기" className="h-full w-[12px] border border-[#6d8db0] bg-linear-to-br from-[#4a6f99] to-[#10305a]" />
      </div>
    </footer>
  );
}

export default function App() {
  return (
    <div className={"relative flex h-screen flex-col overflow-hidden bg-[#bfdbff] " + KR}>
      <header className="shrink-0">
        <TitleBar />
        <Tabs />
        <Ribbon />
      </header>
      <button type="button" aria-label="Office 단추" className="absolute top-0.5 left-0.5"><Orb /></button>
      <FormulaBar />
      <main className="flex min-h-0 flex-1">
        <div className="min-w-0 flex-1 overflow-hidden"><Sheet /></div>
        <VScroll />
      </main>
      <SheetTabs />
      <StatusBar />
      <Taskbar />
    </div>
  );
}
